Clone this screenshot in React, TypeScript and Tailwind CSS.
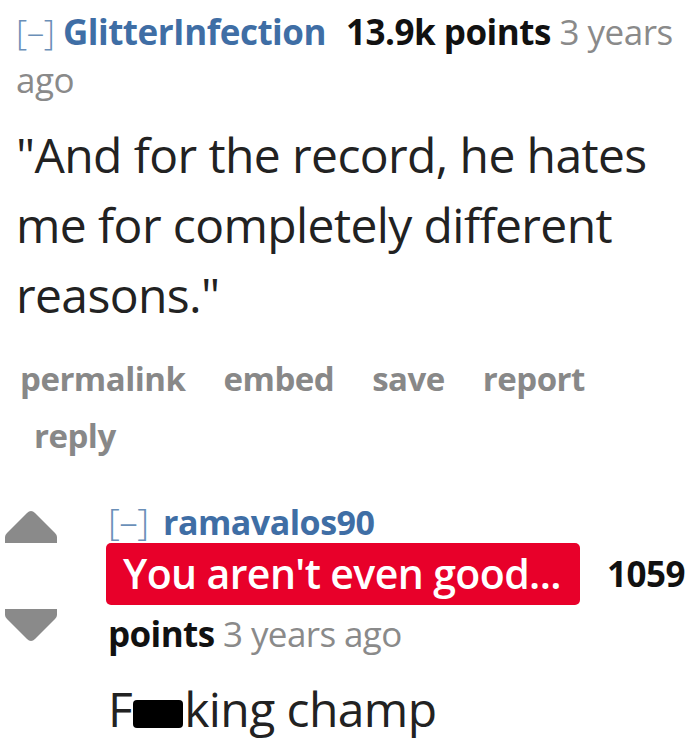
import React from 'react';

const font = { fontFamily: '"Open Sans", "Noto Sans", sans-serif' };

function Arrow({ down }: { down?: boolean }) {
  return (
    <svg width="52" height="33" viewBox="0 0 52 33" className={down ? 'rotate-180' : ''}>
      <path d="M22 3 Q26 -1 30 3 L50 23 Q52 25 52 27 L52 33 L0 33 L0 27 Q0 25 2 23 Z" fill="#8a8a8a" />
    </svg>
  );
}

export default function App() {
  return (
    <div className="w-[700px] h-[747px] bg-white overflow-hidden pl-4 pr-3" style={font}>
      {/* parent comment header */}
      <div className="pt-[8px] text-[35px] leading-[48px] tracking-[-0.5px]">
        <span className="text-[#6b8fb8] font-light">[–]</span>{' '}
        <span className="font-bold text-[#3f6ea5] mr-5">GlitterInfection</span>
        <span className="font-bold text-[#111]">13.9k points</span>{' '}
        <span className="text-[#8a8a8a]">3 years</span>{' '}
        <span className="text-[#8a8a8a]">ago</span>
      </div>

      <p className="mt-[16px] text-[48px] leading-[70px] text-[#222] tracking-[-0.6px] pr-2">
        "And for the record, he hates me for completely different reasons."
      </p>

      {/* actions */}
      <div className="mt-[20px] text-[33px] font-bold text-[#888] leading-[57px] tracking-[-0.5px]">
        <div className="flex gap-[38px] pl-1">
          <span>permalink</span>
          <span>embed</span>
          <span>save</span>
          <span>report</span>
        </div>
        <div className="pl-[18px]">reply</div>
      </div>

      {/* child comment */}
      <div className="mt-[37px] flex -ml-[11px]">
        <div className="w-[103px] shrink-0 flex flex-col gap-[66px] pt-[9px]">
          <Arrow />
          <Arrow down />
        </div>
        <div>
          <div className="text-[34px] leading-[40px] tracking-[-0.5px]">
            <span className="text-[#6b8fb8] font-light text-[37px] mr-[6px]">[–]</span>{' '}
            <span className="font-bold text-[#3f6ea5]">ramavalos90</span>
          </div>
          <div className="flex items-center mt-[1px]">
            <div className="bg-[#e8002a] rounded-[5px] h-[62px] w-[474px] -ml-[2px] flex items-center pl-[17px] text-white text-[41px] font-semibold tracking-[-0.6px]">
              You aren't even good...
            </div>
            <span className="ml-[27px] font-bold text-[35px] text-[#111] tracking-[-0.5px]">1059</span>
          </div>
          <div className="mt-[7px] text-[35px] leading-[44px] tracking-[-0.6px]">
            <span className="font-bold text-[#111]">points</span>{' '}
            <span className="text-[#8a8a8a]">3 years ago</span>
          </div>
          <p className="mt-[23px] text-[48px] leading-[60px] text-[#222] tracking-[-0.6px]">
            F<span className="inline-block bg-black w-[50px] h-[28px] rounded-[4px] align-[-1px] mx-[1px]" />king champ
          </p>
        </div>
      </div>
    </div>
  );
}
